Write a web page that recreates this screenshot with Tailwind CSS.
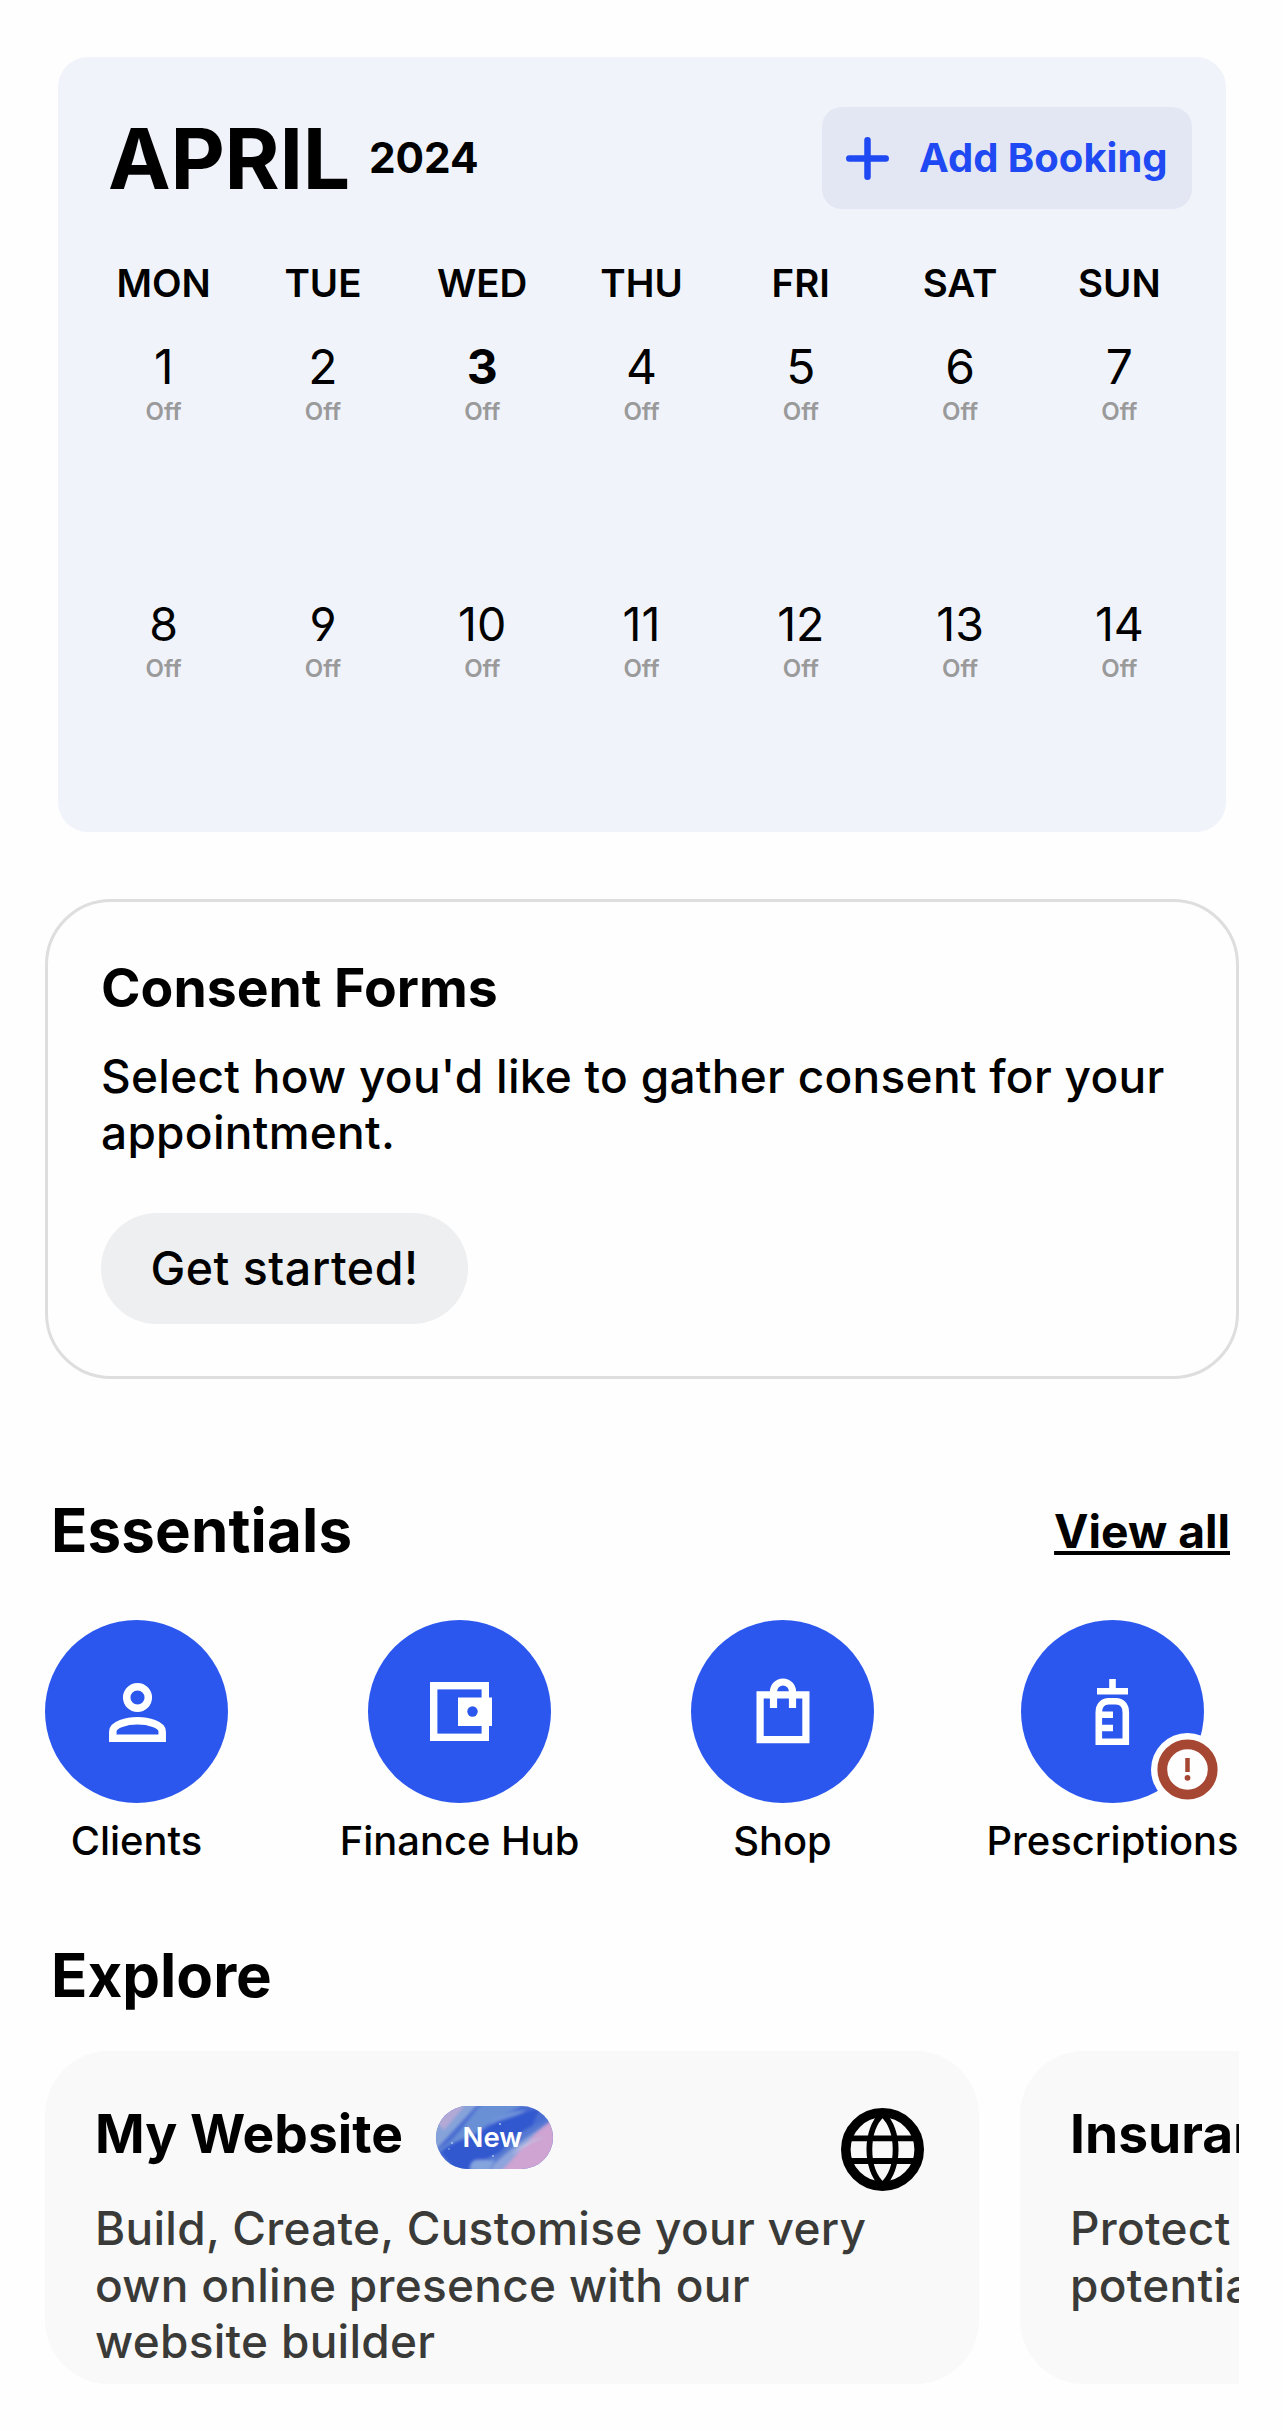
<!DOCTYPE html>
<html lang="en">
<head>
    <meta charset="UTF-8">
    <meta name="viewport" content="width=device-width, initial-scale=1.0">
    <title>Dashboard</title>
    <script src="https://cdn.jsdelivr.net/npm/@tailwindcss/browser@4"></script>
</head>
<body class="bg-[#fefefe] text-black font-['Inter',sans-serif] overflow-x-hidden">
    <main class="w-[1283px] h-[2431px] pt-[57px] overflow-hidden">

        <!-- Calendar -->
        <section class="ml-[58px] w-[1168px] h-[775px] rounded-[30px] bg-[#f0f3fa] pt-[50px]">
            <div class="flex items-center justify-between h-[102px] pl-[50px] pr-[34px]">
                <div class="flex items-center gap-[19px] pt-[1px]">
                    <h1 class="text-[84px] leading-none font-bold tracking-[-0.3px]">APRIL</h1>
                    <span class="text-[42.3px] leading-none font-bold">2024</span>
                </div>
                <button class="flex items-center w-[370px] h-[102px] rounded-[20px] bg-[#e3e7f3] pl-[24px] text-[#1f49f2]">
                    <svg class="w-[43px] h-[43px]" viewBox="0 0 43 43" fill="none" stroke="currentColor" stroke-width="6.5" stroke-linecap="round">
                        <path d="M21.5 3.3v36.4M3.3 21.5h36.4"/>
                    </svg>
                    <span class="ml-[30px] text-[40px] leading-none font-bold whitespace-nowrap">Add Booking</span>
                </button>
            </div>

            <div class="grid grid-cols-7 ml-[26px] w-[1115px] mt-[49px] text-center text-[38.5px] leading-[50px] font-semibold">
                <span>MON</span>
                <span>TUE</span>
                <span>WED</span>
                <span>THU</span>
                <span>FRI</span>
                <span>SAT</span>
                <span>SUN</span>
            </div>

            <div id="week-1" class="grid grid-cols-7 ml-[26px] w-[1115px] h-[257px] mt-[34px] text-center text-[48px] leading-[50px]"></div>
            <div id="week-2" class="grid grid-cols-7 ml-[26px] w-[1115px] text-center text-[46.5px] leading-[50px] [font-feature-settings:'cv04']"></div>
        </section>

        <!-- Consent forms -->
        <section class="ml-[45px] mt-[67px] w-[1194px] h-[480px] rounded-[66px] border-[3px] border-[#dedede] pt-[54px] pl-[53px]">
            <h2 class="text-[53.5px] leading-[64px] font-bold">Consent Forms</h2>
            <p class="mt-[28px] text-[46px] leading-[56.3px] font-medium tracking-[0.28px] whitespace-nowrap">Select how you'd like to gather consent for your<br>appointment.</p>
            <button class="mt-[52px] flex items-center justify-center w-[367px] h-[111px] pt-[1px] rounded-full bg-[#eeeff1] text-[46.5px] font-medium tracking-[0.5px] whitespace-nowrap">Get started!</button>
        </section>

        <!-- Essentials -->
        <section class="mt-[115px]">
            <div class="flex items-center justify-between pl-[51px] pr-[53px]">
                <h2 class="text-[60px] leading-[72px] font-bold tracking-[0.15px]">Essentials</h2>
                <a href="#" class="pt-[1px] text-[46.2px] leading-[56px] font-bold underline decoration-[4px] underline-offset-[3px] [text-decoration-skip-ink:none]">View all</a>
            </div>
            <div class="flex gap-[111.5px] mt-[54px] pl-[45px] text-[39.9px] leading-[48px] font-medium whitespace-nowrap">
                <div class="flex flex-col items-center w-[183px]">
                    <svg class="w-[183px] h-[183px]" viewBox="0 0 183 183" fill="none" stroke="#fff" stroke-width="7.5">
                        <circle cx="91.5" cy="91.5" r="91.5" fill="#2b57ee" stroke="none"/>
                        <circle cx="92.5" cy="77.5" r="10.8"/>
                        <path d="M67.8 118.3v-6.8c0-7 14-10.7 24.7-10.7s24.7 3.7 24.7 10.7v6.8z"/>
                    </svg>
                    <span class="mt-[14px]">Clients</span>
                </div>
                <div class="flex flex-col items-center w-[240px]">
                    <svg class="w-[183px] h-[183px]" viewBox="0 0 183 183">
                        <circle cx="91.5" cy="91.5" r="91.5" fill="#2b57ee"/>
                        <rect x="65.7" y="65.7" width="51.6" height="51.6" fill="none" stroke="#fff" stroke-width="7.4"/>
                        <rect x="90" y="77.5" width="34" height="28.5" fill="#fff"/>
                        <circle cx="104.5" cy="91.5" r="5.2" fill="#2b57ee"/>
                    </svg>
                    <span class="mt-[14px]">Finance Hub</span>
                </div>
                <div class="flex flex-col items-center w-[183px]">
                    <svg class="w-[183px] h-[183px]" viewBox="0 0 183 183" fill="none" stroke="#fff" stroke-width="7.2">
                        <circle cx="91.5" cy="91.5" r="91.5" fill="#2b57ee" stroke="none"/>
                        <path d="M69.1 74.9h45.8v44.7H69.1z"/>
                        <path d="M82.5 88V71.5a9.5 9.5 0 0 1 19 0V88"/>
                    </svg>
                    <span class="mt-[14px]">Shop</span>
                </div>
                <div class="flex flex-col items-center w-[252px] ml-[1px]">
                    <div class="relative">
                        <svg class="w-[183px] h-[183px]" viewBox="0 0 183 183" fill="none" stroke="#fff" stroke-width="6.6">
                            <circle cx="91.5" cy="91.5" r="91.5" fill="#2b57ee" stroke="none"/>
                            <path d="M91.5 59v12M76 71.3h31"/>
                            <path d="M77.8 121.7V92.5c0-7 4-11.2 10-11.2h7c6 0 10 4.2 10 11.2v29.2zM78 94.8h14M78 108h14"/>
                        </svg>
                        <svg class="absolute left-[130px] top-[112.5px] w-[73px] h-[73px]" viewBox="0 0 73 73">
                            <circle cx="36.5" cy="36.5" r="36.5" fill="#fefefe"/>
                            <circle cx="36.5" cy="36.5" r="25.2" fill="none" stroke="#a54733" stroke-width="9.8"/>
                            <path d="M36.5 25v14" stroke="#a54733" stroke-width="4.5"/>
                            <circle cx="36.5" cy="44.8" r="2.9" fill="#a54733"/>
                        </svg>
                    </div>
                    <span class="mt-[14px]">Prescriptions</span>
                </div>
            </div>
        </section>

        <!-- Explore -->
        <section class="mt-[74px]">
            <h2 class="ml-[51px] text-[60px] leading-[72px] font-bold">Explore</h2>
            <div class="flex gap-[41px] mt-[40px] ml-[45px] w-[1194px] overflow-hidden">
                <article class="shrink-0 w-[934px] h-[333px] rounded-[64px] bg-[#f9f9f9] pt-[51px] pl-[50px] pr-[55px]">
                    <div class="flex items-start h-[64px]">
                        <h3 class="text-[53.3px] leading-[64px] font-bold whitespace-nowrap">My Website</h3>
                        <div class="relative shrink-0 ml-[33px] mt-[4px] w-[117px] h-[63px] rounded-full overflow-hidden">
                            <svg class="w-full h-full" viewBox="0 0 117 63">
                                <defs>
                                    <filter id="soft"><feGaussianBlur stdDeviation="1.8"/></filter>
                                </defs>
                                <rect width="117" height="63" fill="#4a6dd2"/>
                                <g filter="url(#soft)">
                                    <path d="M-6 50L46 -6H-6z" fill="#86a3d9"/>
                                    <path d="M8 24L30 -2H14L0 16z" fill="#b3a9d6"/>
                                    <path d="M2 44C22 34 34 8 48 -4h46C70 6 60 14 44 24S22 46 14 60z" fill="#6990d5"/>
                                    <path d="M4 46C22 30 36 34 54 20S88 8 104 2L96 20C74 30 64 48 48 66H20z" fill="#3158cf"/>
                                    <path d="M52 18C64 8 78 4 90 5c-10 6-24 8-34 13z" fill="#6f93da"/>
                                    <path d="M40 66C46 48 60 54 70 40S98 22 118 8v26L76 66z" fill="#5579d3"/>
                                    <path d="M58 58C76 42 92 30 118 14v16L70 68H52z" fill="#8da4dc"/>
                                    <path d="M64 66C82 50 92 30 120 12v54z" fill="#cfa3d2"/>
                                    <path d="M76 48C88 42 96 34 112 31 98 32 90 36 78 46z" fill="#c2c6e6"/>
                                    <path d="M34 64c0-12 8-10 14-10s10 2 12-2L52 66z" fill="#84a4de"/>
                                </g>
                                <g fill="#a9c0ee">
                                    <circle cx="16" cy="37" r="1"/>
                                    <circle cx="64" cy="18" r="1"/>
                                    <circle cx="57" cy="50" r="1"/>
                                    <circle cx="13" cy="43" r="0.8"/>
                                </g>
                            </svg>
                            <span class="absolute inset-0 flex items-center justify-center pt-[1px] pr-[4px] text-[27.5px] font-semibold text-white">New</span>
                        </div>
                        <svg class="shrink-0 ml-auto mt-[6px] w-[83px] h-[83px]" viewBox="0 0 83 83" fill="none" stroke="#000">
                            <circle cx="41.5" cy="41.5" r="36.7" stroke-width="9.6"/>
                            <path d="M7 30.3h69M7 53h69" stroke-width="5.8"/>
                            <path d="M41.5 6C24 22 24 61 41.5 77C59 61 59 22 41.5 6z" stroke-width="5.8"/>
                        </svg>
                    </div>
                    <p class="mt-[34px] text-[46px] leading-[56.5px] font-medium tracking-[0.28px] text-[#3a3b38] whitespace-nowrap">Build, Create, Customise your very<br>own online presence with our<br>website builder</p>
                </article>
                <article class="shrink-0 w-[934px] h-[333px] rounded-[64px] bg-[#f9f9f9] pt-[51px] pl-[50px]">
                    <h3 class="text-[53.3px] leading-[64px] font-bold">Insurance</h3>
                    <p class="mt-[34px] text-[46px] leading-[56.5px] font-medium tracking-[0.28px] text-[#3a3b38] whitespace-nowrap">Protect your<br>potential</p>
                </article>
            </div>
        </section>
    </main>

    <script>
        const today = 3;

        function renderWeek(id, first) {
            const week = document.getElementById(id);
            for (let day = first; day < first + 7; day++) {
                const weight = day === today ? 'font-bold' : 'font-normal';
                week.innerHTML += `
                    <div class="flex flex-col">
                        <span class="${weight}">${day}</span>
                        <span class="mt-[5px] text-[24px] leading-[30px] font-semibold text-[#9a9a9a]">Off</span>
                    </div>`;
            }
        }

        renderWeek('week-1', 1);
        renderWeek('week-2', 8);
    </script>
</body>
</html>
